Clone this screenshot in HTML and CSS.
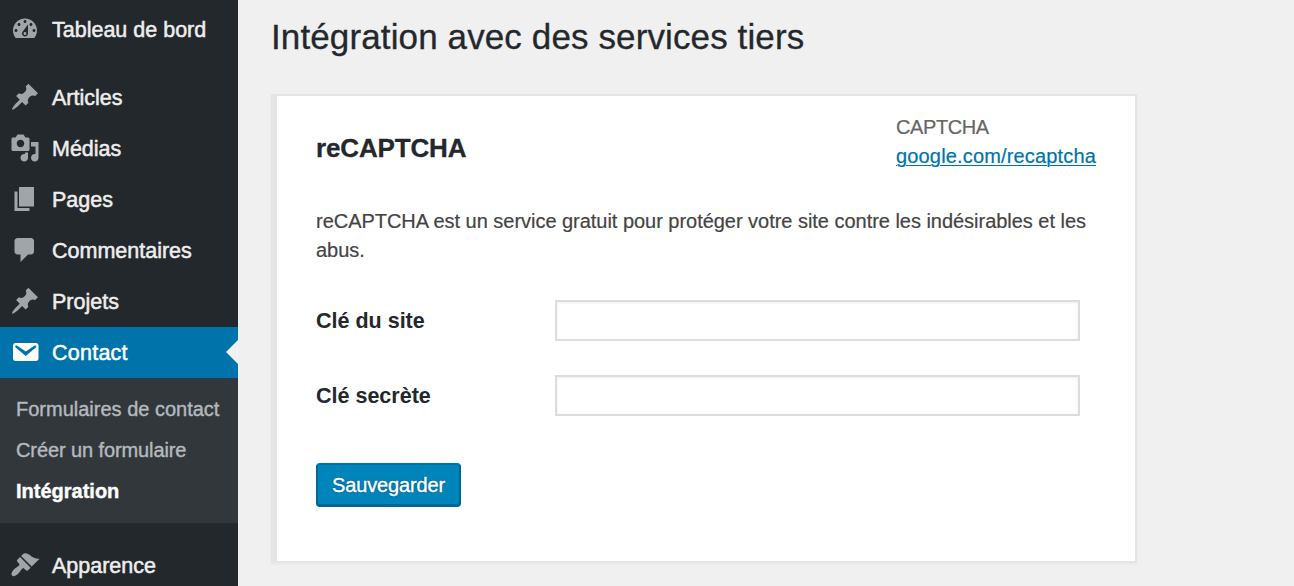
FILE: index.html
```
<!DOCTYPE html>
<html lang="fr">
<head>
  <meta charset="UTF-8" />
  <meta name="viewport" content="width=device-width, initial-scale=1.0"/>
  <title>Intégration avec des services tiers</title>
  <link rel="stylesheet" href="styles.css">
</head>
<body>
  <div class="admin">
    <nav class="sidebar">
      <a class="menu-item first" href="#">
        <svg class="icon" viewBox="0 0 20 20"><path d="M3.76 16h12.48c1.1-1.37 1.76-3.11 1.76-5 0-4.42-3.58-8-8-8s-8 3.58-8 8c0 1.89.66 3.63 1.76 5zM10 4c.55 0 1 .45 1 1s-.45 1-1 1-1-.45-1-1 .45-1 1-1zM6 6c.55 0 1 .45 1 1s-.45 1-1 1-1-.45-1-1 .45-1 1-1zm8 0c.55 0 1 .45 1 1s-.45 1-1 1-1-.45-1-1 .45-1 1-1zm-5.37 5.55L12 7v6c0 1.1-.9 2-2 2s-2-.9-2-2c0-.57.24-1.08.63-1.45zM4 10c.55 0 1 .45 1 1s-.45 1-1 1-1-.45-1-1 .45-1 1-1zm12 0c.55 0 1 .45 1 1s-.45 1-1 1-1-.45-1-1 .45-1 1-1zm-5 3c0-.55-.45-1-1-1s-1 .45-1 1 .45 1 1 1 1-.45 1-1z"/></svg>
        <span>Tableau de bord</span>
      </a>
      <a class="menu-item" href="#">
        <svg class="icon" viewBox="0 0 20 20"><path d="M10.44 3.02l1.82-1.82 6.36 6.35-1.83 1.82c-1.05-.68-2.48-.57-3.41.36l-.75.75c-.92.93-1.04 2.35-.35 3.41l-1.83 1.82-2.41-2.41-2.8 2.79c-.42.42-3.38 2.71-3.8 2.29s1.86-3.39 2.28-3.81l2.79-2.79L4.1 9.36l1.83-1.82c1.05.69 2.48.57 3.4-.36l.75-.75c.93-.92 1.05-2.35.36-3.41z"/></svg>
        <span>Articles</span>
      </a>
      <a class="menu-item" href="#">
        <svg class="icon" viewBox="0 0 20 20"><path d="M13 11V4c0-.55-.45-1-1-1h-1.67L9 1H5L3.67 3H2c-.55 0-1 .45-1 1v7c0 .55.45 1 1 1h10c.55 0 1-.45 1-1zM7 4.5c1.38 0 2.5 1.12 2.5 2.5S8.38 9.5 7 9.5 4.5 8.38 4.5 7 5.62 4.5 7 4.5zM14 6h5v10.5c0 1.38-1.12 2.5-2.5 2.5S14 17.88 14 16.5s1.12-2.5 2.5-2.5c.17 0 .34.02.5.05V9h-3V6zm-4 8.05V13h2v3.5c0 1.38-1.12 2.5-2.5 2.5S7 17.88 7 16.5 8.12 14 9.5 14c.17 0 .34.02.5.05z"/></svg>
        <span>Médias</span>
      </a>
      <a class="menu-item" href="#">
        <svg class="icon" viewBox="0 0 20 20"><path d="M6 15V2h10v13H6zm-1 1h8v2H3V5h2v11z"/></svg>
        <span>Pages</span>
      </a>
      <a class="menu-item" href="#">
        <svg class="icon" viewBox="0 0 20 20"><path d="M5 2h9c1.1 0 2 .9 2 2v7c0 1.1-.9 2-2 2h-2l-5 5v-5H5c-1.1 0-2-.9-2-2V4c0-1.1.9-2 2-2z"/></svg>
        <span>Commentaires</span>
      </a>
      <a class="menu-item" href="#">
        <svg class="icon" viewBox="0 0 20 20"><path d="M10.44 3.02l1.82-1.82 6.36 6.35-1.83 1.82c-1.05-.68-2.48-.57-3.41.36l-.75.75c-.92.93-1.04 2.35-.35 3.41l-1.83 1.82-2.41-2.41-2.8 2.79c-.42.42-3.38 2.71-3.8 2.29s1.86-3.39 2.28-3.81l2.79-2.79L4.1 9.36l1.83-1.82c1.05.69 2.48.57 3.4-.36l.75-.75c.93-.92 1.05-2.35.36-3.41z"/></svg>
        <span>Projets</span>
      </a>
      <a class="menu-item current" href="#">
        <svg class="icon" viewBox="0 0 20 20"><path d="M3.87 4h13.25C18.37 4 19 4.59 19 5.79v8.42c0 1.19-.63 1.79-1.88 1.79H3.87c-1.25 0-1.88-.6-1.88-1.79V5.79c0-1.2.63-1.79 1.88-1.79zm6.62 8.6l6.74-5.53c.24-.2.43-.66.13-1.07-.29-.41-.82-.42-1.17-.17l-5.7 3.86L4.8 5.83c-.35-.25-.88-.24-1.17.17-.3.41-.11.87.13 1.07z"/></svg>
        <span>Contact</span>
      </a>
      <div class="submenu">
        <a href="#">Formulaires de contact</a>
        <a class="new-form" href="#">Créer un formulaire</a>
        <a class="active" href="#">Intégration</a>
      </div>
      <a class="menu-item" href="#">
        <svg class="icon" viewBox="0 0 20 20"><path d="M14.48 11.06L7.41 3.99l1.5-1.5c.5-.56 2.3-.47 3.51.32 1.21.8 1.43 1.28 2.91 2.1 1.18.64 2.45 1.26 4.45.85zm-.71.71L6.7 4.7 4.93 6.47c-.39.39-.39 1.02 0 1.41l1.06 1.06c.39.39.39 1.03 0 1.42-.6.6-1.43 1.11-2.21 1.69-.35.26-.7.53-1.01.84C1.43 14.23.4 16.08 1.4 17.07c.99 1 2.84-.03 4.18-1.36.31-.31.58-.66.85-1.02.57-.78 1.08-1.61 1.69-2.21.39-.39 1.02-.39 1.41 0l1.06 1.06c.39.39 1.02.39 1.41 0z"/></svg>
        <span>Apparence</span>
      </a>
    </nav>

    <main class="content">
      <h1>Intégration avec des services tiers</h1>
      <div class="card">
        <div class="card-head">
          <h2>reCAPTCHA</h2>
          <div class="infobox">
            <span class="category">CAPTCHA</span><br>
            <a href="#">google.com/recaptcha</a>
          </div>
        </div>
        <p>reCAPTCHA est un service gratuit pour protéger votre site contre les indésirables et les abus.</p>
        <form>
          <div class="row">
            <label for="sitekey">Clé du site</label>
            <input type="text" id="sitekey" name="sitekey" />
          </div>
          <div class="row">
            <label for="secret">Clé secrète</label>
            <input type="text" id="secret" name="secret" />
          </div>
          <button type="button">Sauvegarder</button>
        </form>
      </div>
    </main>
  </div>
</body>
</html>
```
FILE: styles.css
```
* {
  box-sizing: border-box;
}
body {
  font-family: "Liberation Sans", Arial, sans-serif;
  font-size: 20px;
  margin: 0;
  background: #f0f0f0;
  color: #444;
  overflow: hidden;
}
.admin {
  display: flex;
  height: 586px;
}
.sidebar {
  width: 238px;
  flex: none;
  padding-top: 4px;
  background: #23282d;
  overflow: hidden;
}
.menu-item {
  display: flex;
  align-items: center;
  gap: 12px;
  height: 51px;
  padding-left: 10px;
  font-size: 21.5px;
  color: #eee;
  text-decoration: none;
  -webkit-text-stroke: 0.5px;
}
.menu-item span {
  padding-top: 1px;
}
.menu-item.first {
  margin-bottom: 17px;
}
.icon {
  width: 30px;
  height: 30px;
  margin-bottom: 2px;
  fill: #a0a5aa;
  stroke: none;
}
.current {
  background: #0073aa;
  color: #fff;
  letter-spacing: 0.25px;
}
.current .icon {
  fill: #fff;
}
/* notch pointing at the current menu item */
.current::after {
  content: "";
  margin-left: auto;
  margin-bottom: 1px;
  border: 12px solid transparent;
  border-left: none;
  border-right-color: #f0f0f0;
}
.submenu {
  height: 145px;
  margin-bottom: 17px;
  padding: 11px 0 0 16px;
  background: #32373c;
}
.submenu a {
  display: block;
  line-height: 41px;
  color: #b4b9be;
  text-decoration: none;
  white-space: nowrap;
  -webkit-text-stroke: 0.4px;
}
.submenu .new-form {
  letter-spacing: -0.1px;
}
.submenu .active {
  color: #fff;
  font-weight: bold;
}
.content {
  flex: 1;
  padding: 14px 0 0 33px;
}
h1 {
  margin: 0 0 34px;
  font-size: 35px;
  font-weight: normal;
  line-height: 46px;
  letter-spacing: 0.12px;
  color: #23282d;
  -webkit-text-stroke: 0.3px;
}
.card {
  width: 866px;
  height: 469px;
  padding: 17px 39px 0 39px;
  background: #fff;
  border: 2px solid #e5e5e5;
  border-left-width: 6px;
  box-shadow: 0 1px 2px rgba(0, 0, 0, 0.04);
}
.card-head {
  display: flex;
  justify-content: space-between;
}
h2 {
  margin: 19px 0 0;
  font-size: 26px;
  line-height: 32px;
  letter-spacing: -0.15px;
  color: #23282d;
  -webkit-text-stroke: 0.3px;
}
.infobox {
  line-height: 29px;
  -webkit-text-stroke: 0.2px;
}
.category {
  color: #666;
  letter-spacing: -0.4px;
}
.infobox a {
  color: #0073aa;
  letter-spacing: 0.16px;
  text-underline-offset: 2px;
  text-decoration-thickness: 1px;
}
p {
  margin: 36px 0 0;
  line-height: 29px;
  letter-spacing: -0.03px;
  -webkit-text-stroke: 0.2px;
}
form {
  margin-top: 35px;
}
.row {
  display: flex;
  align-items: center;
  margin-bottom: 34px;
}
label {
  width: 239px;
  padding-top: 2px;
  font-size: 21.5px;
  font-weight: bold;
  color: #23282d;
}
input {
  width: 525px;
  height: 41px;
  border: 2px solid #ddd;
  background: #fff;
  box-shadow: inset 0 1px 3px rgba(0, 0, 0, 0.07);
}
button {
  display: block;
  width: 145px;
  height: 43px;
  margin-top: 47px;
  padding: 2px 0 0;
  font-family: inherit;
  font-size: 20px;
  letter-spacing: -0.15px;
  color: #fff;
  background: #0085ba;
  border: 2px solid #006799;
  border-top-color: #0073aa;
  border-radius: 4px;
  box-shadow: 0 1px 0 #006799;
  text-shadow: 0 -1px 1px #006799, 1px 0 1px #006799, 0 1px 1px #006799, -1px 0 1px #006799;
  -webkit-text-stroke: 0.4px;
}
```
